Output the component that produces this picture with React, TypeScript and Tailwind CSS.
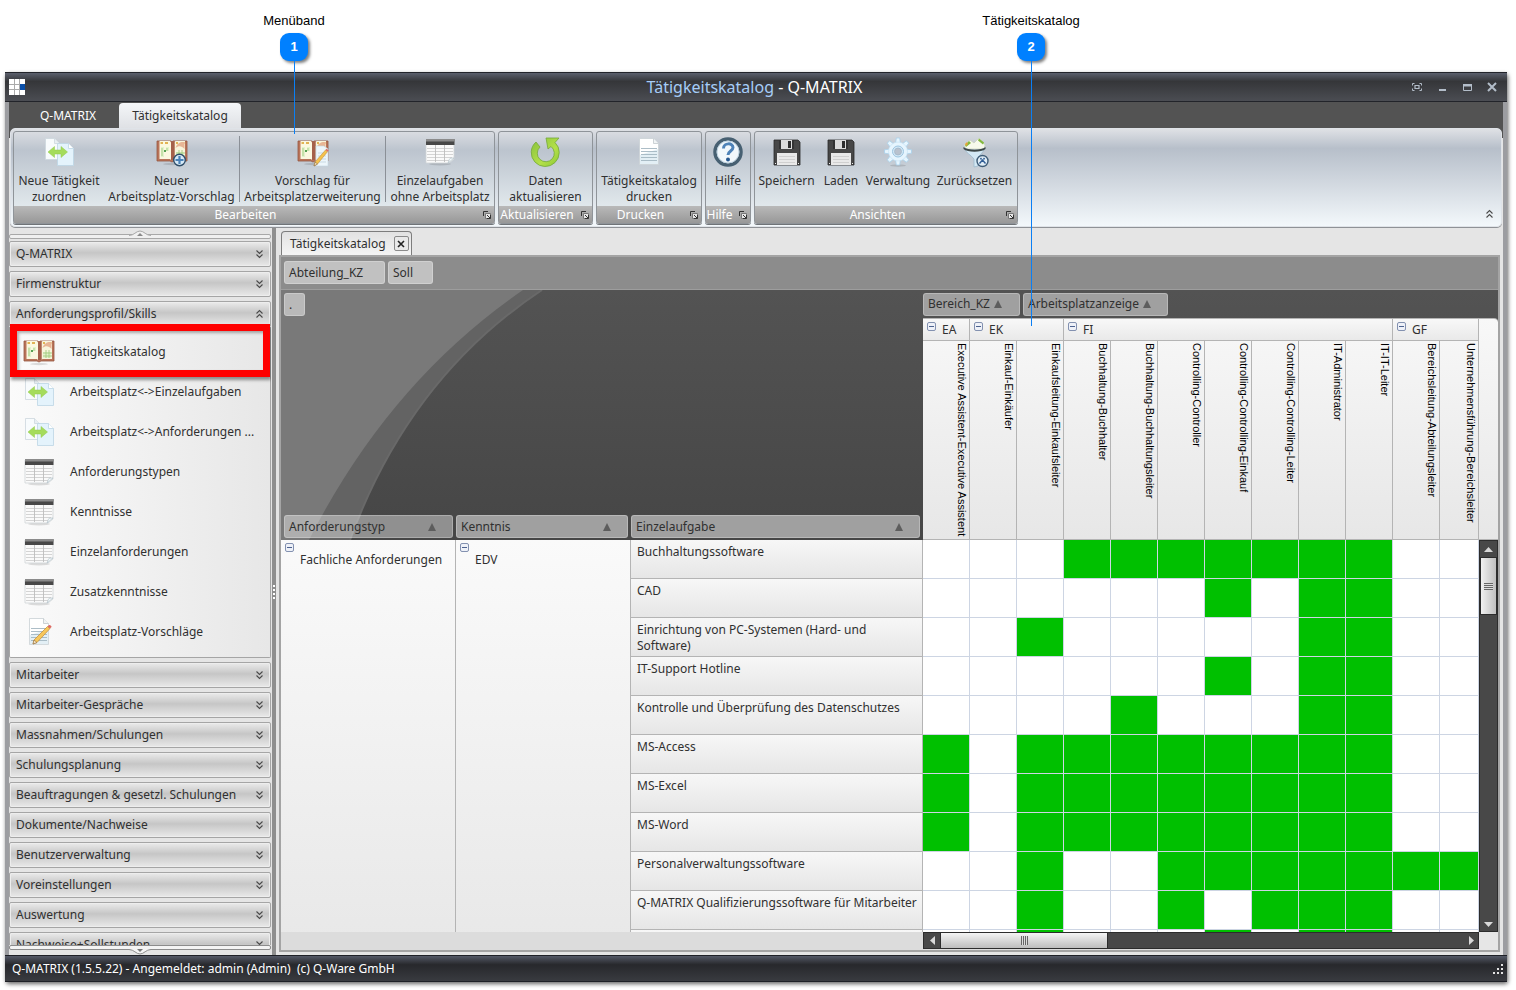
import { useState } from "react";
import type { ReactNode } from "react";

const ui = "font-['Noto_Sans',sans-serif]";

const bereiche = [
  { name: "EA", span: 1 },
  { name: "EK", span: 2 },
  { name: "FI", span: 7 },
  { name: "GF", span: 2 },
];

const arbeitsplaetze = [
  "Executive Assistent-Executive Assistent",
  "Einkauf-Einkäufer",
  "Einkaufsleitung-Einkaufsleiter",
  "Buchhaltung-Buchhalter",
  "Buchhaltung-Buchhaltungsleiter",
  "Controlling-Controller",
  "Controlling-Controlling-Einkauf",
  "Controlling-Controlling-Leiter",
  "IT-Administrator",
  "IT-IT-Leiter",
  "Bereichsleitung-Abteilungsleiter",
  "Unternehmensführung-Bereichsleiter",
];

// x = Einzelaufgabe ist dem Arbeitsplatz zugeordnet
const aufgaben = [
  { name: "Buchhaltungssoftware", plan: "...xxxxxxx.." },
  { name: "CAD", plan: "......x.xx.." },
  { name: "Einrichtung von PC-Systemen (Hard- und\nSoftware)", plan: "..x.....xx.." },
  { name: "IT-Support Hotline", plan: "......x.xx.." },
  { name: "Kontrolle und Überprüfung des Datenschutzes", plan: "....x...xx.." },
  { name: "MS-Access", plan: "x.xxxxxxxx.." },
  { name: "MS-Excel", plan: "x.xxxxxxxx.." },
  { name: "MS-Word", plan: "x.xxxxxxxx.." },
  { name: "Personalverwaltungssoftware", plan: "..x..xxxxxxx" },
  { name: "Q-MATRIX Qualifizierungssoftware für Mitarbeiter", plan: "..x..x.xxx.." },
  { name: "", plan: "..x...x.xx.." },
];

/* ICONS */

function Svg({ children }: { children: ReactNode }) {
  return (
    <svg viewBox="0 0 32 32" className="size-8 shrink-0" aria-hidden="true">
      {children}
    </svg>
  );
}

function PagesIcon() {
  return (
    <Svg>
      <path d="M2.500 2.500h9l5 5v16h-14z" fill="#f8fbfd" stroke="#cdd7dd" strokeWidth=".8" />
      <path d="M11.500 2.500v5h5" fill="#e8eff3" stroke="#cdd7dd" strokeWidth=".8" />
      <path d="M14.500 7.500h11l5 5v17h-16z" fill="#e4f3fc" stroke="#bcd5e4" strokeWidth=".8" />
      <path d="M25.500 7.500v5h5" fill="#fff" stroke="#bcd5e4" strokeWidth=".8" />
      <path d="M5 16l6.500-5.500V14h6.500v-3.500L24.500 16 18 21.500V18h-6.500v3.500z" fill="#a5dc5c" stroke="#93cb4b" strokeWidth=".5" />
    </Svg>
  );
}

function Book() {
  return (
    <>
      <ellipse cx="16" cy="28" rx="9" ry="1.200" fill="#000" opacity=".12" />
      <path d="M1 5h14l1 1 1-1h14v20H18l-2 1-2-1H1z" fill="#b9745a" stroke="#955540" strokeWidth=".8" />
      <path d="M3.500 5H14l1 1.500V24l-1-1H3.500z" fill="#fbf8e0" />
      <path d="M18.500 6l1-1h9.500v18H19.500l-1 1z" fill="#f8f5dc" />
      <path d="M15 6h3.500v18H15z" fill="#a5604a" />
      <path d="M4.500 7h2.500m2 0h3m8 0h2m4 0h2.500" stroke="#e2b354" strokeWidth="2" />
      <path d="M5 11h3v10H5zm5 0h3v4h-3zm10 5h8v6h-8z" fill="#e3f2cc" />
      <path d="M19.500 12c1.500-5 5-6.500 9-6v7c-3-3.500-6-3.500-9-1z" fill="#e8b595" />
      <path d="M20 17h9M20 20h9M23 14v8M26 14v8M6 12v8M11 12v3" stroke="#a3cc80" strokeWidth=".9" fill="none" />
      <path d="M8 14h2v2H8z" fill="#58a153" />
    </>
  );
}

function BookIcon() {
  return (
    <Svg>
      <Book />
    </Svg>
  );
}

function BookAddIcon() {
  return (
    <Svg>
      <Book />
      <circle cx="23.500" cy="24" r="5.800" fill="#d7eaf7" stroke="#2f4e69" strokeWidth="1.400" />
      <path d="M23.500 20v8M19.500 24h8" stroke="#4a82b8" strokeWidth="2.200" />
    </Svg>
  );
}

function BookEditIcon() {
  return (
    <Svg>
      <Book />
      <path d="M19 10h8l4 3v17H19z" fill="#edf6fb" stroke="#c5d6e0" strokeWidth=".6" />
      <path d="M21 17h8M21 20h8M21 23h8M21 26h8" stroke="#b9cdd9" strokeWidth=".7" />
      <path d="M17 30l1-4 10.500-12 2 1.700L20.500 28z" fill="#f5c24c" stroke="#b98430" strokeWidth=".5" />
      <path d="M28.500 14l1.200-1.300 2 1.700-1.200 1.300z" fill="#dc6b62" />
      <path d="M17 30l1-4 2.500 2z" fill="#f8e2bd" stroke="#7a5a34" strokeWidth=".5" />
    </Svg>
  );
}

function TableIcon() {
  return (
    <Svg>
      <ellipse cx="16" cy="28" rx="11" ry="1.500" fill="#000" opacity=".12" />
      <path d="M2 4h28v19l-5 4H2z" fill="#fafafa" stroke="#cfd4d7" strokeWidth=".8" />
      <path d="M2 3h28.500v6H2z" fill="#484848" />
      <path d="M2 3h28.500v2.500H2z" fill="#8b8b8b" />
      <path d="M3 12.500h26M3 15.500h26M3 18.500h26M3 21.500h25M3 24.500h22" stroke="#cfcfcf" strokeWidth=".9" />
      <path d="M11.500 9v17M20.500 9v17" stroke="#bcbcbc" strokeWidth=".9" />
      <path d="M30 22c-3 0-4 0-4.500 1L24 27z" fill="#f5fafc" stroke="#b4c3ca" strokeWidth=".7" />
    </Svg>
  );
}

function Page() {
  return (
    <>
      <path d="M6.500 2.500h14l5 5v21h-19z" fill="#fff" stroke="#c9d0d4" strokeWidth=".8" />
      <path d="M7 19l18-6v15H7z" fill="#dcebf2" opacity=".8" />
      <path d="M20.500 2.500v5h5" fill="#f1f4f5" stroke="#c0c8cc" strokeWidth=".8" />
      <path d="M8 12.500h16M8 15.500h16M8 18.500h16M8 21.500h16M8 24.500h16" stroke="#a3b5c1" strokeWidth=".9" />
    </>
  );
}

function PageIcon() {
  return (
    <Svg>
      <Page />
    </Svg>
  );
}

function PageEditIcon() {
  return (
    <Svg>
      <Page />
      <path d="M10 28l1-4L24.500 10.500l2.500 2L14 26.500z" fill="#f7c75a" stroke="#c18a35" strokeWidth=".7" />
      <path d="M24.500 10.500l1.500-1.500c.8-.6 3 1.200 2.500 2L27 12.500z" fill="#dd6a63" />
      <path d="M10 28l1-4 3 2.500z" fill="#f9e5c3" stroke="#7a5a34" strokeWidth=".5" />
    </Svg>
  );
}

function RefreshIcon() {
  return (
    <Svg>
      <defs>
        <linearGradient id="refresh" x1="0" y1="0" x2="1" y2="1">
          <stop offset="0" stopColor="#86c03c" />
          <stop offset=".6" stopColor="#b4e04a" />
          <stop offset="1" stopColor="#8cc832" />
        </linearGradient>
      </defs>
      <path
        d="M6 6A14 14 0 1 0 25 6.500L29 2H16l2 11 3-2.500A8.500 8.500 0 1 1 10 11z"
        fill="url(#refresh)"
        stroke="#74a83a"
        strokeWidth=".8"
        strokeLinejoin="round"
      />
    </Svg>
  );
}

function HelpIcon() {
  return (
    <Svg>
      <circle cx="16" cy="16" r="13" fill="#f2f8fc" stroke="#476072" strokeWidth="3.500" />
      <circle cx="16" cy="16" r="11" fill="none" stroke="#bcd1df" />
      <path d="M11.500 12.500c0-6 9.500-6 9.500-1 0 3.500-5 3.500-5 7.500" fill="none" stroke="#4f83b8" strokeWidth="3" />
      <circle cx="16" cy="23.500" r="2" fill="#25578f" />
    </Svg>
  );
}

function FloppyIcon() {
  return (
    <Svg>
      <path d="M3 4h24l2 2v23H3z" fill="#474747" stroke="#2a2a2a" strokeWidth=".8" />
      <path d="M8 4h15v9H8z" fill="#333" />
      <path d="M10 4h11v9H10z" fill="#dcdcdc" />
      <path d="M17 5h3v7h-3z" fill="#2d2d2d" />
      <path d="M6 17h20v12H6z" fill="#e9e9e9" />
      <path d="M8 20.500h16M8 23.500h16M8 26.500h16" stroke="#d0d0d0" />
      <path d="M4 27h1v1H4zm23 0h1v1h-1z" fill="#eee" />
    </Svg>
  );
}

function GearIcon() {
  return (
    <Svg>
      <ellipse cx="16" cy="29.500" rx="8" ry="1.200" fill="#000" opacity=".12" />
      <g fill="#e6f5fe" stroke="#a9d2ec" strokeWidth=".8">
        {[0, 45, 90, 135, 180, 225, 270, 315].map((winkel) => (
          <path key={winkel} d="M13.500 8l.8-6h3.400l.8 6z" transform={`rotate(${winkel} 16 15.5)`} />
        ))}
      </g>
      <circle cx="16" cy="15.500" r="9.500" fill="#e6f5fe" stroke="#c3e1f4" strokeWidth=".6" />
      <circle cx="16" cy="15.500" r="5.500" fill="#d3e8f6" stroke="#9cc5e0" strokeWidth="1" />
      <circle cx="16" cy="15.500" r="3.500" fill="#b9c2ce" stroke="#a2b7c9" strokeWidth=".8" />
    </Svg>
  );
}

function FunnelIcon() {
  return (
    <Svg>
      <path d="M5 9l6-5 4 3 5-5 6 7-1 4H7z" fill="#f7faec" stroke="#c9d1bd" strokeWidth=".7" />
      <path d="M6 9l4-4 2 2-5 4zM20 2.500l5 4-1 2-5-4z" fill="#82b83c" />
      <path d="M6 8l2-2 1 2-2 2z" fill="#e8a13a" />
      <path d="M5 12c5 3 17 3 21 0-2 5-6 7-7 11v7l-4 1v-8C12 19 7 17 5 12z" fill="#d3e8f4" stroke="#9dbacd" strokeWidth=".8" />
      <path d="M4.500 11c4 3.500 18 3.500 22 0v2c-4 3.500-18 3.500-22 0z" fill="#3c4646" />
      <circle cx="23.500" cy="25" r="5.500" fill="#e0edf6" stroke="#3f5d78" strokeWidth="1.400" />
      <path d="M20.500 27.500l3-3.500 3 3.500M21.500 22l1 1.500M25.500 22l-1 1.500" fill="none" stroke="#2f5c94" strokeWidth="1.400" />
    </Svg>
  );
}

function Chevrons({ up }: { up?: boolean }) {
  return (
    <svg viewBox="0 0 9 10" className="h-[10px] w-[9px] shrink-0" fill="none" stroke="#4a4a4a" strokeWidth="1.100" aria-hidden="true">
      {up
        ? <path d="M1.500 4.500l3-3 3 3M1.500 8.500l3-3 3 3" />
        : <path d="M1.500 1.500l3 3 3-3M1.500 5.500l3 3 3-3" />}
    </svg>
  );
}

function Minus() {
  return (
    <button
      aria-label="Reduzieren"
      className="flex size-[9px] shrink-0 items-center justify-center rounded-[2px] border border-[#8391b0] bg-[#eef1f8]"
    >
      <span className="h-px w-[5px] bg-[#4d628f]" />
    </button>
  );
}

/* MENÜBAND */

function RibbonButton({
  icon,
  lines,
  className,
}: {
  icon: ReactNode;
  lines: string[];
  className: string;
}) {
  return (
    <button className={`flex h-[74px] shrink-0 flex-col items-center gap-[5px] pt-1 leading-4 whitespace-nowrap ${className}`}>
      {icon}
      <span>
        {lines.map((line) => (
          <span key={line} className="block">
            {line}
          </span>
        ))}
      </span>
    </button>
  );
}

function RibbonGroup({
  title,
  children,
}: {
  title: string;
  children: ReactNode;
}) {
  return (
    <section className="flex flex-col rounded-[3px] border border-[#8f9499] bg-linear-to-b from-[#d9dce1] via-[#bcc4ce] via-20% to-[#ecf3f5] shadow-[0_1px_0_#6f7377]">
      <div className="flex">{children}</div>
      <div className="flex h-[17px] items-center bg-linear-to-b from-[#b9b9b9] to-[#989898] pr-[2px] text-white">
        <span className="flex min-w-0 flex-1 justify-center pr-1 leading-4">{title}</span>
        <button aria-label={`${title} Optionen`} className="flex h-4 w-[11px] items-center justify-center">
          <svg viewBox="0 0 9 9" className="size-[9px]" fill="none" stroke="#333" aria-hidden="true">
            <path d="M1.500 6V1.500H6" />
            <path d="M3.500 3.500h5v5h-5z" fill="#e8e8e8" stroke="#777" />
            <path d="M5 5l3 3M8.500 5v3.500H5" />
          </svg>
        </button>
      </div>
    </section>
  );
}

function Ribbon() {
  return (
    <div className="mx-px mb-px flex h-[99px] items-start rounded-[5px] border border-[#dfe3e8] bg-linear-to-b from-[#dfe1e5] via-[#b7bfca] via-20% to-[#f3f8fb] pt-[2px] pl-[2px] shadow-[0_1px_0_#8f9296]">
      <div className="flex gap-[3px]">
        <RibbonGroup title="Bearbeiten">
          <RibbonButton className="w-[90px]" icon={<PagesIcon />} lines={["Neue Tätigkeit", "zuordnen"]} />
          <RibbonButton className="w-[135px]" icon={<BookAddIcon />} lines={["Neuer", "Arbeitsplatz-Vorschlag"]} />
          <div className="mt-1 h-[66px] w-px bg-[#8b9097]" />
          <RibbonButton className="w-[145px]" icon={<BookEditIcon />} lines={["Vorschlag für", "Arbeitsplatzerweiterung"]} />
          <div className="mt-1 h-[66px] w-px bg-[#8b9097]" />
          <RibbonButton className="w-[108px]" icon={<TableIcon />} lines={["Einzelaufgaben", "ohne Arbeitsplatz"]} />
        </RibbonGroup>
        <RibbonGroup title="Aktualisieren">
          <RibbonButton className="w-[93px]" icon={<RefreshIcon />} lines={["Daten", "aktualisieren"]} />
        </RibbonGroup>
        <RibbonGroup title="Drucken">
          <RibbonButton className="w-[104px]" icon={<PageIcon />} lines={["Tätigkeitskatalog", "drucken"]} />
        </RibbonGroup>
        <RibbonGroup title="Hilfe">
          <RibbonButton className="w-[44px]" icon={<HelpIcon />} lines={["Hilfe"]} />
        </RibbonGroup>
        <RibbonGroup title="Ansichten">
          <RibbonButton className="w-[63px]" icon={<FloppyIcon />} lines={["Speichern"]} />
          <RibbonButton className="w-[46px]" icon={<FloppyIcon />} lines={["Laden"]} />
          <RibbonButton className="w-[68px]" icon={<GearIcon />} lines={["Verwaltung"]} />
          <RibbonButton className="w-[85px]" icon={<FunnelIcon />} lines={["Zurücksetzen"]} />
        </RibbonGroup>
      </div>
      <button aria-label="Menüband minimieren" className="mr-[7px] mb-[7px] ml-auto self-end">
        <Chevrons up />
      </button>
    </div>
  );
}

/* NAVIGATION */

const eintraege = [
  { name: "Tätigkeitskatalog", icon: <BookIcon /> },
  { name: "Arbeitsplatz<->Einzelaufgaben", icon: <PagesIcon /> },
  { name: "Arbeitsplatz<->Anforderungen ...", icon: <PagesIcon /> },
  { name: "Anforderungstypen", icon: <TableIcon /> },
  { name: "Kenntnisse", icon: <TableIcon /> },
  { name: "Einzelanforderungen", icon: <TableIcon /> },
  { name: "Zusatzkenntnisse", icon: <TableIcon /> },
  { name: "Arbeitsplatz-Vorschläge", icon: <PageEditIcon /> },
];

const gruppen = [
  "Q-MATRIX",
  "Firmenstruktur",
  "Anforderungsprofil/Skills",
  "Mitarbeiter",
  "Mitarbeiter-Gespräche",
  "Massnahmen/Schulungen",
  "Schulungsplanung",
  "Beauftragungen & gesetzl. Schulungen",
  "Dokumente/Nachweise",
  "Benutzerverwaltung",
  "Voreinstellungen",
  "Auswertung",
  "Nachweise+Sollstunden",
];

function Sidebar() {
  const [offen, setOffen] = useState("Anforderungsprofil/Skills");

  return (
    <nav className="flex w-[263px] shrink-0 flex-col pt-[6px] pr-px">
      <button aria-label="Nach oben" className="relative h-[5px] shrink-0 rounded-[2px] border border-[#a8a8a8] bg-[#f0f0f0]">
        <svg viewBox="0 0 22 7" className="absolute -top-[5px] left-[119px] h-[7px] w-[22px]" aria-hidden="true">
          <path d="M0 5.500C5 5.500 7 1 11 1s6 4.500 11 4.500V7H0z" fill="#f0f0f0" />
          <path d="M0 5.500C5 5.500 7 1 11 1s6 4.500 11 4.500" fill="none" stroke="#a8a8a8" />
          <path d="M8 6l3-3 3 3z" fill="#8a8a8a" />
        </svg>
      </button>

      <div className="mt-[2px] flex min-h-0 flex-1 flex-col gap-1 overflow-hidden">
        {gruppen.map((gruppe) => (
          <div key={gruppe} className="flex shrink-0 flex-col">
            <button
              onClick={() => setOffen(gruppe)}
              className="flex h-[26px] items-center justify-between rounded-[2px] border border-[#a5a5a5] bg-linear-to-b from-[#ebebeb] via-[#c6c6c6] via-45% to-[#e9e9e9] pr-[6px] pl-[6px] text-left shadow-[inset_0_0_0_1px_#ededed]"
            >
              {gruppe}
              <Chevrons up={offen === gruppe} />
            </button>
            {offen === gruppe && (
              <div className="rounded-b-[2px] border border-t-0 border-[#a5a5a5] bg-linear-to-r from-[#fbfbfb] to-[#e7e7e7] py-[5px]">
                {eintraege.map((eintrag, index) => (
                  <div key={eintrag.name} className="relative">
                    <button className="flex h-10 w-full items-center gap-[15px] pl-[13px] text-left whitespace-nowrap">
                      {eintrag.icon}
                      {eintrag.name}
                    </button>
                    {index === 0 && (
                      <div className="pointer-events-none absolute inset-x-0 -top-2 -bottom-[5px] z-10 border-[7px] border-[#ff0000] shadow-[1px_3px_3px_rgba(0,0,0,0.4),inset_2px_2px_3px_rgba(0,0,0,0.3)]" />
                    )}
                  </div>
                ))}
              </div>
            )}
          </div>
        ))}
      </div>

      <button aria-label="Nach unten" className="relative mb-[5px] h-[5px] shrink-0 rounded-[2px] border border-[#8c8c8c] bg-[#f4f4f4]">
        <svg viewBox="0 0 22 7" className="absolute top-[2px] left-[119px] h-[7px] w-[22px]" aria-hidden="true">
          <path d="M0 1.500C5 1.500 7 6 11 6s6-4.500 11-4.500V0H0z" fill="#f4f4f4" />
          <path d="M0 1.500C5 1.500 7 6 11 6s6-4.500 11-4.500" fill="none" stroke="#8c8c8c" />
          <path d="M8 1l3 3 3-3z" fill="#777" />
        </svg>
      </button>
    </nav>
  );
}

/* PIVOT */

function Chip({
  label,
  className,
  sort,
  sortRight,
}: {
  label: string;
  className: string;
  sort?: boolean;
  sortRight?: boolean;
}) {
  return (
    <button className={`flex h-[23px] shrink-0 items-center gap-1 rounded-[3px] border border-white/25 pl-[4px] text-left font-normal ${className}`}>
      {label}
      {sort && (
        <svg viewBox="0 0 8 8" className={sortRight ? "mr-4 ml-auto size-2" : "size-2"} aria-hidden="true">
          <path d="M0 8L4 0l4 8z" fill="#5d5d5d" />
        </svg>
      )}
    </button>
  );
}

function Corner() {
  return (
    <div className="relative h-[250px]">
      <svg viewBox="0 0 642 250" className="absolute inset-0 h-[250px] w-[642px]" aria-hidden="true">
        <path d="M0 0h261Q128 88 69 250H0z" fill="#636363" />
        <path d="M261 0Q128 88 69 250" fill="none" stroke="#696969" strokeWidth="2" />
        <path d="M0 0h242Q108 92 28 250H0z" fill="#797979" />
      </svg>
      <div className="relative flex h-full flex-col justify-between py-[3px] pb-[2px] pl-[3px]">
        <Chip label="." className="w-[21px] bg-[#b9b9b9]" />
        <div className="flex gap-[3px]">
          <Chip label="Anforderungstyp" sort sortRight className="w-[169px] bg-white/40" />
          <Chip label="Kenntnis" sort sortRight className="w-[172px] bg-[#a0a0a0]" />
          <Chip label="Einzelaufgabe" sort sortRight className="w-[289px] bg-[#a0a0a0]" />
        </div>
      </div>
    </div>
  );
}

function PivotTable() {
  return (
    <table className="w-full min-w-[1198px] table-fixed border-separate border-spacing-0">
      <colgroup>
        <col className="w-[175px]" />
        <col className="w-[175px]" />
        <col className="w-[292px]" />
        {arbeitsplaetze.slice(1).map((platz) => (
          <col key={platz} className="w-[47px]" />
        ))}
        <col />
      </colgroup>
      <thead>
        <tr>
          <td colSpan={3} rowSpan={3} className="p-0 align-top">
            <Corner />
          </td>
          <td colSpan={12} className="h-7 p-0">
            <div className="flex gap-[3px]">
              <Chip label="Bereich_KZ" sort className="w-[97px] bg-[#a0a0a0]" />
              <Chip label="Arbeitsplatzanzeige" sort className="w-[145px] bg-[#a0a0a0]" />
            </div>
          </td>
        </tr>
        <tr>
          {bereiche.map((bereich) => (
            <th
              key={bereich.name}
              colSpan={bereich.span}
              scope="colgroup"
              className="h-[23px] border-t border-r border-b border-[#b4b4b4] bg-linear-to-b from-[#f8f8f8] to-[#e9e9e9] p-0 text-left font-normal"
            >
              <div className="flex gap-[6px] pl-[4px] leading-5">
                <span className="pt-[2px]"><Minus /></span>
                {bereich.name}
              </div>
            </th>
          ))}
        </tr>
        <tr>
          {arbeitsplaetze.map((platz) => (
            <th
              key={platz}
              scope="col"
              className="h-[199px] border-r border-b border-[#b4b4b4] bg-linear-to-b from-[#f6f6f6] to-[#e7e7e7] p-0 align-top font-['Liberation_Sans',Arial,sans-serif] text-[11px] font-normal text-black"
            >
              <div className="flex justify-end pt-[2px] pr-px">
                <span className="leading-3 whitespace-nowrap [writing-mode:vertical-rl]">{platz}</span>
              </div>
            </th>
          ))}
        </tr>
      </thead>
      <tbody>
        {aufgaben.map((aufgabe, index) => (
          <tr key={index}>
            {index === 0 && (
              <>
                <th rowSpan={11} scope="rowgroup" className="border-r border-[#b4b4b4] bg-linear-to-b from-[#fafafa] to-[#e7e7e7] p-0 align-top font-normal">
                  <div className="flex gap-[6px] pt-[3px] pl-[4px] text-left">
                    <Minus />
                    <span className="pt-[9px] leading-4 whitespace-nowrap">Fachliche Anforderungen</span>
                  </div>
                </th>
                <th rowSpan={11} scope="rowgroup" className="border-r border-[#b4b4b4] bg-linear-to-b from-[#fafafa] to-[#e7e7e7] p-0 align-top font-normal">
                  <div className="flex gap-[6px] pt-[3px] pl-[4px] text-left">
                    <Minus />
                    <span className="pt-[9px] leading-4">EDV</span>
                  </div>
                </th>
              </>
            )}
            <th scope="row" className="h-[39px] border-r border-b border-[#b4b4b4] bg-linear-to-b from-[#f7f7f7] to-[#e6e6e6] pt-1 pr-0 pb-0 pl-[6px] text-left align-top leading-4 font-normal whitespace-pre">
              {aufgabe.name}
            </th>
            {[...aufgabe.plan].map((wert, spalte) => (
              <td
                key={spalte}
                className={`border-r border-b border-[#cdd5e3] p-0 ${wert === "x" ? "bg-[#00c000]" : "bg-white"}`}
              />
            ))}
          </tr>
        ))}
      </tbody>
    </table>
  );
}

function Workspace() {
  return (
    <main className="flex min-w-0 flex-1 flex-col pr-[3px] pb-[3px] pl-[3px]">
      <div className="flex h-[27px] shrink-0 items-end pl-[2px]">
        <div className="flex h-6 items-center gap-[8px] rounded-t-[4px] border border-b-0 border-[#7d7d7d] bg-linear-to-b from-[#e2e2e2] to-[#f4f4f4] pr-[2px] pl-[8px]">
          Tätigkeitskatalog
          <button aria-label="Schliessen" className="flex size-[15px] items-center justify-center rounded-[2px] border border-[#8a8a8a] bg-[#e9e9e9]">
            <svg viewBox="0 0 8 8" className="size-2" stroke="#222" strokeWidth="1.600" aria-hidden="true">
              <path d="M1 1l6 6M7 1L1 7" />
            </svg>
          </button>
        </div>
      </div>

      <div className="flex min-h-0 flex-1 flex-col border-2 border-[#a4a4a4] bg-[#dcdcdc]">
        <div className="flex h-[33px] shrink-0 gap-[3px] border-b border-[#9d9d9d] bg-[#8c8c8c] pt-[4px] pl-[3px]">
          <Chip label="Abteilung_KZ" className="w-[101px] bg-[#c1c1c1]" />
          <Chip label="Soll" className="w-[45px] bg-[#c1c1c1]" />
        </div>

        <div className="flex min-h-0 flex-1 bg-linear-to-b from-[#535353] to-[#464646] to-[250px]">
          <div className="min-w-0 flex-1 overflow-hidden">
            <PivotTable />
          </div>
          <div className="flex w-[19px] shrink-0 flex-col pt-7">
            <div className="h-[222px] shrink-0 rounded-tr-[4px] border-t border-b border-[#b4b4b4] bg-linear-to-b from-[#f8f8f8] to-[#e7e7e7]" />
            <div className="flex min-h-0 flex-1 flex-col border border-[#2c2c2c] bg-[#484848]">
              <button aria-label="Nach oben blättern" className="flex h-4 shrink-0 items-center justify-center">
                <svg viewBox="0 0 9 5" className="h-[5px] w-[9px]" aria-hidden="true">
                  <path d="M0 5l4.500-5L9 5z" fill="#d9d9d9" />
                </svg>
              </button>
              <div className="flex h-[58px] shrink-0 items-center justify-center border border-[#2c2c2c] bg-linear-to-r from-[#f1f1f1] to-[#bfbfbf]">
                <span className="h-[7px] w-[9px] bg-[repeating-linear-gradient(to_bottom,#666_0_1px,#ddd_1px_2px)]" />
              </div>
              <button aria-label="Nach unten blättern" className="mt-auto flex h-[14px] shrink-0 items-center justify-center">
                <svg viewBox="0 0 9 5" className="h-[5px] w-[9px]" aria-hidden="true">
                  <path d="M0 0l4.500 5L9 0z" fill="#d9d9d9" />
                </svg>
              </button>
            </div>
          </div>
        </div>

        <div className="flex h-[18px] shrink-0">
          <div className="w-[642px] shrink-0" />
          <div className="flex h-[17px] min-w-0 flex-1 items-stretch border border-[#2c2c2c] bg-[#484848]">
            <button aria-label="Nach links blättern" className="flex w-[16px] items-center justify-center">
              <svg viewBox="0 0 5 9" className="h-[9px] w-[5px]" aria-hidden="true">
                <path d="M5 0L0 4.500 5 9z" fill="#d9d9d9" />
              </svg>
            </button>
            <div className="flex w-[168px] items-center justify-center border-x border-[#2c2c2c] bg-linear-to-b from-[#f4f4f4] to-[#bdbdbd]">
              <span className="h-[9px] w-[7px] bg-[repeating-linear-gradient(to_right,#666_0_1px,#ddd_1px_2px)]" />
            </div>
            <button aria-label="Nach rechts blättern" className="ml-auto flex w-[14px] items-center justify-center">
              <svg viewBox="0 0 5 9" className="h-[9px] w-[5px]" aria-hidden="true">
                <path d="M0 0l5 4.500L0 9z" fill="#d9d9d9" />
              </svg>
            </button>
          </div>
          <div className="w-[19px] shrink-0 bg-[#e6e6e6]" />
        </div>
      </div>
    </main>
  );
}

/* FENSTER */

function TitleBar() {
  return (
    <header className="-mx-1 flex h-[30px] shrink-0 items-center border-t border-b border-[#22242a] bg-linear-to-b from-[#5a5f6c] via-[#353639] via-30% to-[#4b4d53] pr-[10px] pl-1">
      <svg viewBox="0 0 16 16" className="size-4 shrink-0" aria-hidden="true">
        <path d="M0 0h16v16H0z" fill="#aaa" />
        <path d="M0 0h5v5H0zm6 0h4v5H6zm5 0h5v5h-5zM0 6h5v4H0zm6 0h4v4H6zM0 11h5v5H0zm6 0h4v5H6zm5 0h5v5h-5z" fill="#fff" />
        <path d="M11 5h5v6h-5z" fill="#0a4fa8" />
      </svg>
      <h1 className="flex-1 pl-[72px] text-center text-base leading-5 text-white">
        <span className="text-[#a6cdf8]">Tätigkeitskatalog</span> - Q-MATRIX
      </h1>
      <div className="flex items-center gap-[15px]">
        <button aria-label="Vollbild">
          <svg viewBox="0 0 10 10" className="size-[10px]" fill="none" stroke="#b3bdc9" aria-hidden="true">
            <path d="M.5 3.500v-2h2M7.500 1.500h2v2M9.500 6.500v2h-2M2.500 8.500h-2v-2" />
            <path d="M3 3.500h4v3H3z" strokeWidth="1.200" />
          </svg>
        </button>
        <button aria-label="Minimieren">
          <svg viewBox="0 0 10 10" className="size-[10px]" aria-hidden="true">
            <path d="M2 7h7v2H2z" fill="#b3bdc9" />
          </svg>
        </button>
        <button aria-label="Maximieren">
          <svg viewBox="0 0 10 10" className="size-[10px]" aria-hidden="true">
            <path d="M1.500 2.500h8v6h-8z" fill="none" stroke="#b3bdc9" />
            <path d="M1 2h9v2.500H1z" fill="#b3bdc9" />
          </svg>
        </button>
        <button aria-label="Beenden">
          <svg viewBox="0 0 10 10" className="size-[10px]" stroke="#b3bdc9" strokeWidth="2" aria-hidden="true">
            <path d="M1 1l8 8M9 1L1 9" />
          </svg>
        </button>
      </div>
    </header>
  );
}

function Callout({
  number,
  label,
  className,
  lineClassName,
}: {
  number: number;
  label: string;
  className: string;
  lineClassName: string;
}) {
  return (
    <div className={`pointer-events-none absolute top-3 z-20 flex w-[120px] flex-col items-center ${className}`}>
      <span className="mb-1 font-['Liberation_Sans',Arial,sans-serif] text-[13px] leading-[17px] text-black">{label}</span>
      <span className="flex size-7 items-center justify-center rounded-[9px] bg-[#0080ff] font-['Liberation_Sans',Arial,sans-serif] text-[13px] font-bold text-white shadow-[2px_2px_3px_rgba(0,0,0,0.5)]">
        {number}
      </span>
      <span className={`ml-px w-px bg-[#0a7ff5] ${lineClassName}`} />
    </div>
  );
}

export default function App() {
  return (
    <div className={`relative flex h-screen flex-col bg-white pt-[72px] pr-[9px] pb-2 pl-[5px] text-[12px] text-[#303030] ${ui}`}>
      <Callout number={1} label="Menüband" className="left-[234px]" lineClassName="h-[73px]" />
      <Callout number={2} label="Tätigkeitskatalog" className="left-[971px]" lineClassName="h-[265px]" />

      <div className="flex min-h-0 flex-1 flex-col rounded-[3px] border-x-4 border-[#9c9da1] bg-[#e5e5e5] shadow-[1px_2px_4px_rgba(0,0,0,0.6)]">
        <TitleBar />

        <div className="flex h-[26px] shrink-0 items-end bg-[#535353]">
          <button className="h-[25px] w-[110px] pl-[8px] text-white">Q-MATRIX</button>
          <button className="h-[25px] w-[122px] rounded-t-[4px] bg-linear-to-b from-[#f4f6f8] to-[#dfe1e5]">Tätigkeitskatalog</button>
        </div>

        <div className="flow-root bg-linear-to-b from-[#535353] from-10% to-[#e5e5e5] to-10%">
          <Ribbon />
        </div>

        <div className="flex min-h-0 flex-1">
          <Sidebar />
          <div className="flex w-1 shrink-0 flex-col items-center justify-center gap-[2px] bg-[#8f8f8f]">
            <span className="size-[2px] bg-white" />
            <span className="size-[2px] bg-white" />
            <span className="size-[2px] bg-white" />
            <span className="size-[2px] bg-white" />
          </div>
          <Workspace />
        </div>

        <footer className="-mx-1 flex h-[27px] shrink-0 items-center justify-between border-t border-b border-[#1e2026] bg-linear-to-b from-[#555a68] via-[#27282c] via-35% to-[#393b40] pr-1 pl-[7px] text-white">
          <span className="whitespace-pre">Q-MATRIX (1.5.5.22) - Angemeldet: admin (Admin)  (c) Q-Ware GmbH</span>
          <svg viewBox="0 0 11 11" className="size-[11px]" fill="#e3e3e3" aria-hidden="true">
            <path d="M9 1h2v2H9zM9 5h2v2H9zM5 5h2v2H5zM9 9h2v2H9zM5 9h2v2H5zM1 9h2v2H1z" />
          </svg>
        </footer>
      </div>
    </div>
  );
}
